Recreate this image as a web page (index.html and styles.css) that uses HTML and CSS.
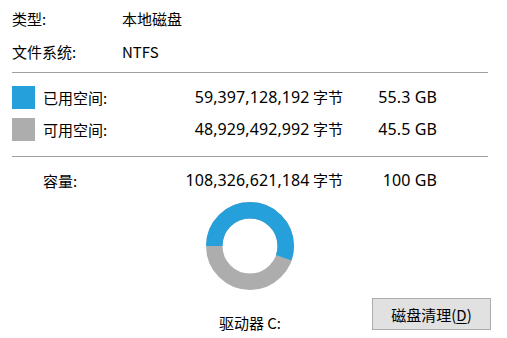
FILE: index.html
```html
<!DOCTYPE html>
<html lang="zh-CN">
<head>
<meta charset="utf-8">
<title>属性</title>
<link rel="stylesheet" href="styles.css">
</head>
<body>
<div class="page">
  <div class="row info">
    <span class="label">类型:</span>
    <span class="value">本地磁盘</span>
  </div>
  <div class="row info">
    <span class="label">文件系统:</span>
    <span class="value">NTFS</span>
  </div>
  <div class="sep sep-top"></div>
  <div class="usage">
    <div class="row stat">
      <span class="swatch used"></span>
      <span class="stat-label">已用空间:</span>
      <span class="bytes"><span class="num">59,397,128,192</span> 字节</span>
      <span class="gb"><span class="num">55.3 GB</span></span>
    </div>
    <div class="row stat">
      <span class="swatch free"></span>
      <span class="stat-label">可用空间:</span>
      <span class="bytes"><span class="num">48,929,492,992</span> 字节</span>
      <span class="gb"><span class="num">45.5 GB</span></span>
    </div>
  </div>
  <div class="sep sep-bottom"></div>
  <div class="row stat capacity">
    <span class="swatch blank"></span>
    <span class="stat-label">容量:</span>
    <span class="bytes"><span class="num">108,326,621,184</span> 字节</span>
    <span class="gb"><span class="num">100 GB</span></span>
  </div>
  <div class="chart-area">
    <svg class="donut" width="88" height="88" viewBox="0 0 88 88" aria-hidden="true">
      <circle cx="44" cy="44" r="35.75" fill="none" stroke="#adadad" stroke-width="16.5"/>
      <circle cx="44" cy="44" r="35.75" fill="none" stroke="#26a0da" stroke-width="16.5"
        stroke-dasharray="124.2 300" transform="rotate(180 44 44)"/>
    </svg>
    <div class="drive">驱动器 C:</div>
    <button class="cleanup" type="button">磁盘清理(<u>D</u>)</button>
  </div>
</div>
</body>
</html>
```
FILE: styles.css
```css
html, body {
  margin: 0;
  padding: 0;
  background: #ffffff;
}

body {
  width: 507px;
  height: 338px;
  overflow: hidden;
  font-family: "Noto Sans CJK SC", "Noto Sans", sans-serif;
  font-size: 15px;
  color: #000000;
}

.page {
  padding: 2px 19px 0 12px;
  display: flex;
  flex-direction: column;
}

.row {
  display: flex;
  align-items: center;
  height: 33px;
  white-space: nowrap;
}

.info .label {
  width: 110px;
}

.sep {
  height: 1px;
  background: #a0a0a0;
}

.sep-top {
  margin-top: 4px;
}

.usage {
  margin-top: 8px;
  display: flex;
  flex-direction: column;
}

.usage .row {
  height: 32px;
}

.sep-bottom {
  margin-top: 11px;
}

.swatch {
  width: 23px;
  height: 23px;
  flex: none;
}

.swatch.used { background: #26a0da; }
.swatch.free { background: #adadad; }
.swatch.blank { background: transparent; }

.stat-label {
  margin-left: 8px;
  width: 100px;
}

.bytes {
  width: 200px;
  text-align: right;
}

.gb {
  width: 94px;
  text-align: right;
}

.num {
  font-family: "Noto Sans", sans-serif;
  font-size: 16px;
  letter-spacing: 0.1px;
}

.capacity {
  margin-top: 7px;
  height: 32px;
}

.chart-area {
  margin-top: 6px;
  display: grid;
  grid-template-columns: 1fr auto 1fr;
  grid-template-rows: 88px 48px;
}

.donut {
  grid-column: 2;
  grid-row: 1;
  display: block;
}

.drive {
  grid-column: 2;
  grid-row: 2;
  align-self: end;
  justify-self: center;
  margin-bottom: 5px;
  line-height: 20px;
}

.cleanup {
  grid-column: 3;
  grid-row: 2;
  justify-self: end;
  align-self: start;
  margin-top: 8px;
  margin-right: -3px;
  width: 119px;
  height: 32px;
  padding: 0;
  background: #e1e1e1;
  border: 1px solid #adadad;
  border-radius: 0;
  font-family: inherit;
  font-size: 15px;
  color: #000000;
}

.cleanup u {
  text-underline-offset: 2px;
}
```
